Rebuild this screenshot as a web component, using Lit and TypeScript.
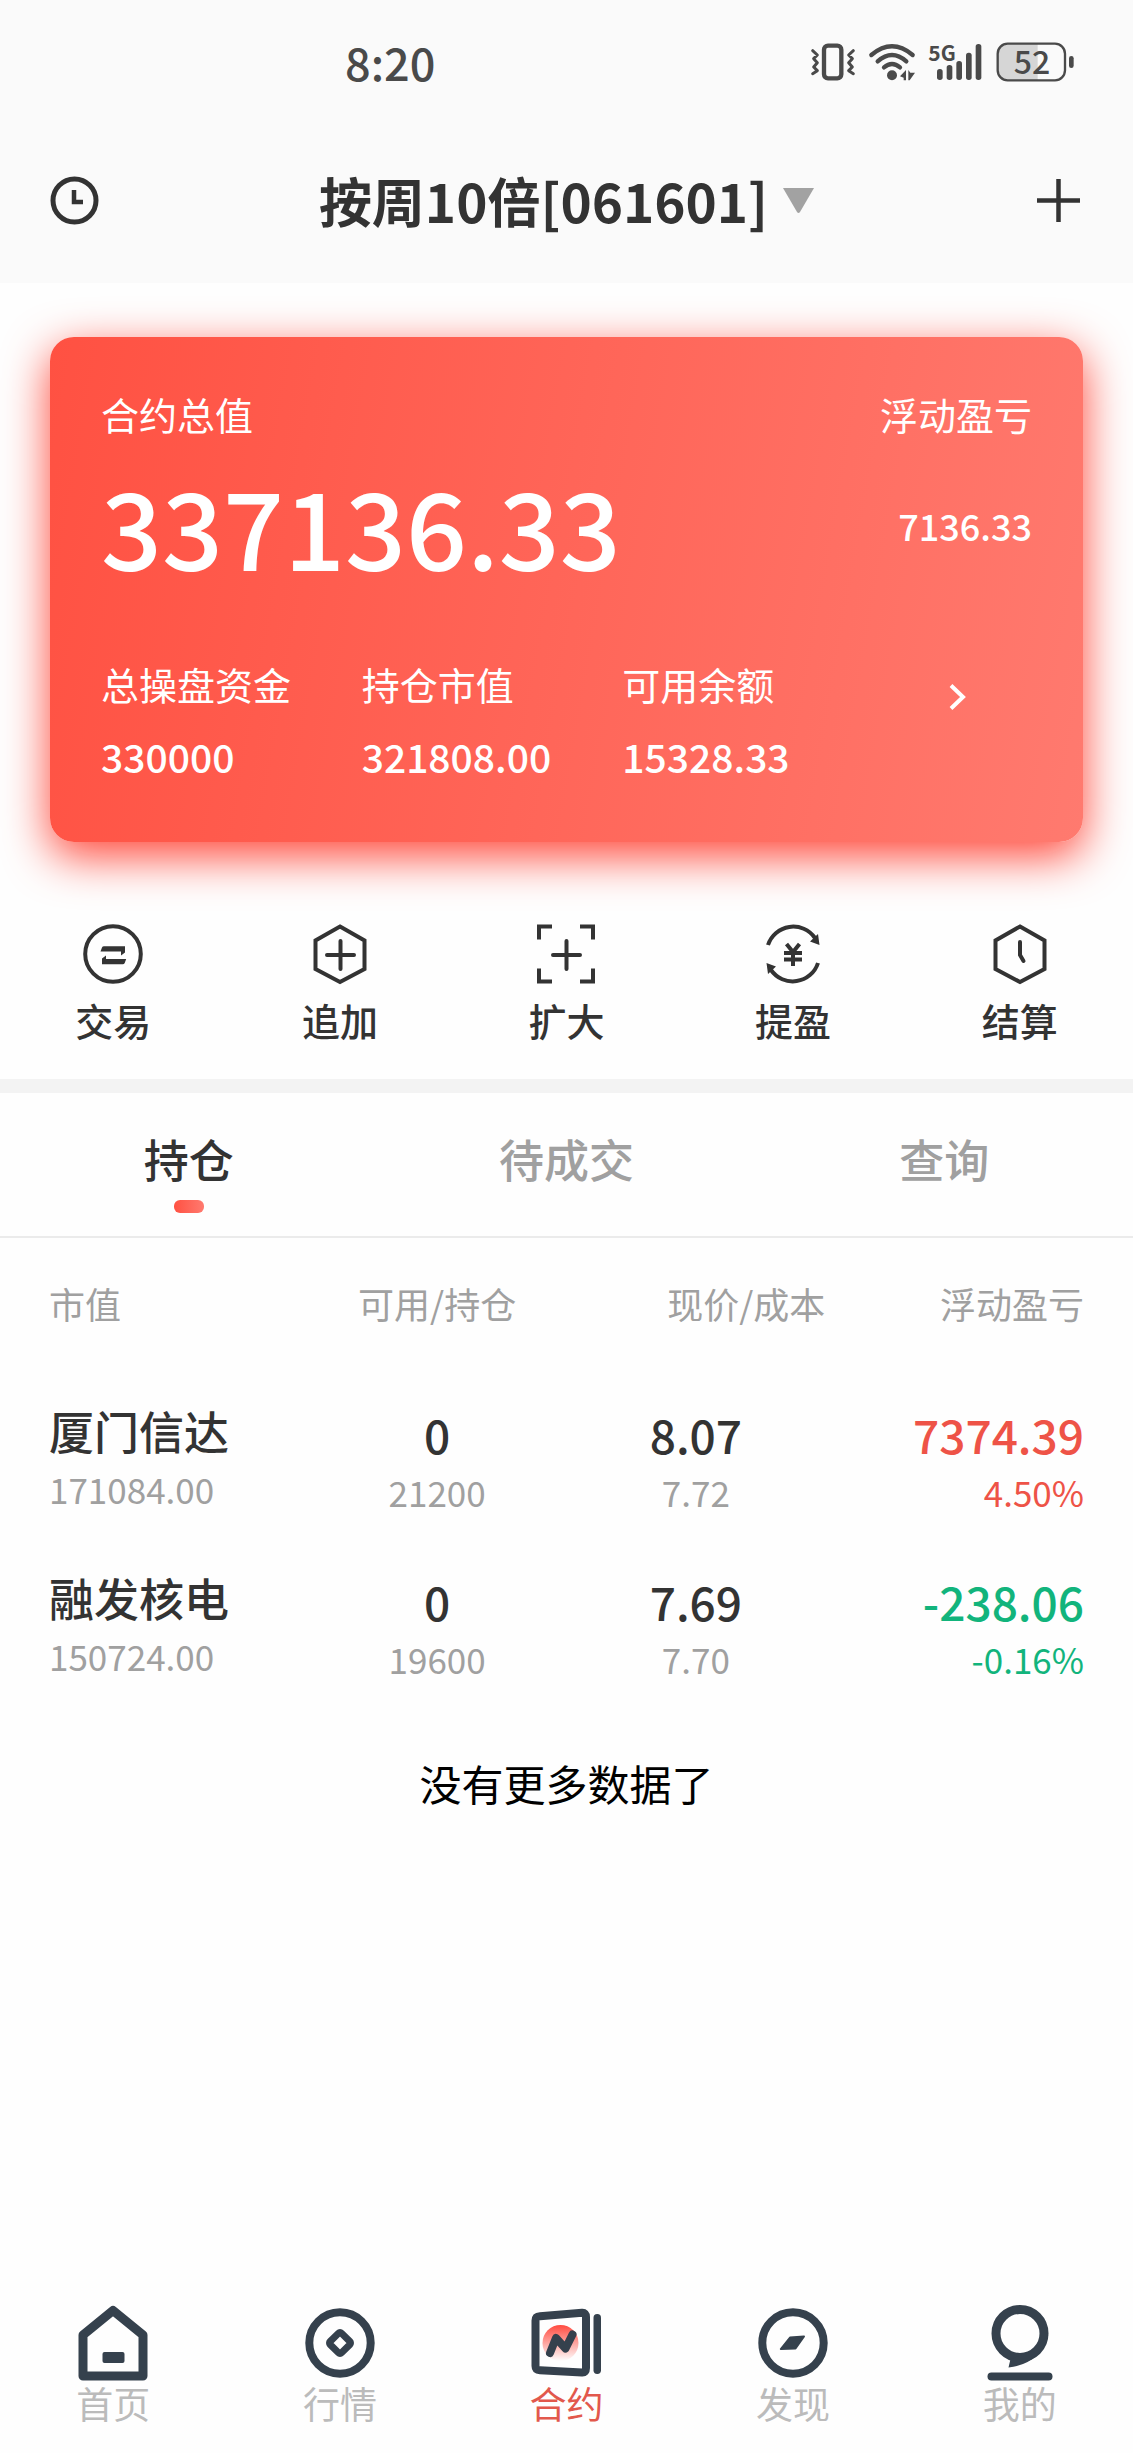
import { LitElement, html, css, svg } from "lit";
import { customElement, state } from "lit/decorators.js";
import { classMap } from "lit/directives/class-map.js";

interface Holding {
  name: string;
  value: string;
  available: string;
  held: string;
  price: string;
  cost: string;
  profit: string;
  rate: string;
  up: boolean;
}

const hexagon = svg`<path d="M30 2.500 L54.500 16.500 V45 L30 58 L5.500 45 V16.500 Z"/>`;
const smallPlus = svg`<path stroke-linecap="round" d="M30.500 17 V45 M17 31 H44"/>`;

const actions = [
  {
    label: "交易",
    icon: svg`<circle cx="30" cy="30" r="27.800"/>
      <path class="solid" d="M17.500 27.500 L19 23.500 Q19.500 22.300 21 22.300 H42 V28.500 L38 31.500 V27.500 Z"/>
      <path class="solid" d="M43.200 35 L41.700 39 Q41.200 40.200 39.700 40.200 H19 V34.500 L23 31.500 V35 Z"/>`,
  },
  { label: "追加", icon: svg`${hexagon}${smallPlus}` },
  {
    label: "扩大",
    icon: svg`<path d="M3 15.500 V2.500 H16 M44 2.500 H57 V15.500 M57 44.500 V57.500 H44 M16 57.500 H3 V44.500"/>${smallPlus}`,
  },
  {
    label: "提盈",
    icon: svg`<path d="M5 21 A26.500 26.500 0 0 1 52 14 M8 46 A26.500 26.500 0 0 0 55 39"/>
      <path class="solid" d="M56.500 21 L47 17.500 L55 10 Z M3.500 39 L13 42.500 L5 50 Z"/>
      <path d="M23.500 20 L30 28 L36.500 20 M21 29 H39 M21 35.500 H39 M30 28 V42"/>`,
  },
  { label: "结算", icon: svg`${hexagon}<path stroke-linecap="round" d="M30 18 V31 L33.500 37"/>` },
];

const navItems = [
  {
    label: "首页",
    icon: svg`<path class="thick" d="M38 5.500 L68 30 V71 H8 V30 Z"/>
      <rect class="solid" x="27.500" y="47" width="22" height="11" rx="2"/>`,
  },
  {
    label: "行情",
    icon: svg`<circle cx="38" cy="38" r="30.700"/>
      <rect x="30" y="30" width="16" height="16" rx="2" stroke-width="7" transform="rotate(45 38 38)"/>`,
  },
  {
    label: "合约",
    icon: svg`<defs><linearGradient id="glow" x1="0" y1="0" x2="0" y2="1">
        <stop offset="0" stop-color="#ff4b40"/><stop offset="1" stop-color="#ff4b40" stop-opacity="0"/>
      </linearGradient></defs>
      <circle cx="32.500" cy="38" r="18" fill="url(#glow)" stroke="none"/>
      <path d="M12 11.200 L54 7.800 Q58 7.500 58 12 V63 Q58 67.800 54 67.500 L12 65.200 Q7.500 65 7.500 61 V15.500 Q7.500 11.500 12 11.200 Z"/>
      <path stroke-linecap="round" d="M22 48 L28 33 L37.500 43.500 L44.500 29.500"/>
      <rect class="solid" x="65.500" y="9" width="7.500" height="60" rx="3.700"/>`,
  },
  {
    label: "发现",
    icon: svg`<circle cx="38" cy="38" r="30.700"/>
      <path class="needle" d="M25.800 44 L35 32.500 L49 31.500 L40.500 43.500 Z"/>`,
  },
  {
    label: "我的",
    icon: svg`<circle class="thick" cx="38" cy="28.500" r="24"/>
      <path class="solid" d="M28.500 54 L26.500 62.500 Q58 59 66.300 30 L50 46 Z"/>
      <rect class="solid" x="5.500" y="67.500" width="65" height="8" rx="4"/>`,
  },
];

@customElement("app-root")
export class AppRoot extends LitElement {
  @state() private tab = 0;
  @state() private nav = 2;

  private readonly holdings: Holding[] = [
    {
      name: "厦门信达", value: "171084.00", available: "0", held: "21200",
      price: "8.07", cost: "7.72", profit: "7374.39", rate: "4.50%", up: true,
    },
    {
      name: "融发核电", value: "150724.00", available: "0", held: "19600",
      price: "7.69", cost: "7.70", profit: "-238.06", rate: "-0.16%", up: false,
    },
  ];

  static styles = css`
    :host {
      display: flex;
      flex-direction: column;
      min-height: 100vh;
      background: #fefefe;
      color: #333;
      font-family: "Noto Sans CJK SC", sans-serif;
      font-size: 38px;
      line-height: 48px;
    }
    button {
      border: 0;
      padding: 0;
      background: none;
      color: inherit;
      font: inherit;
    }
    svg { display: block; flex: none; overflow: visible; }
    .head { background: #fafafa; padding-bottom: 7px; }
    .status {
      display: flex;
      align-items: center;
      justify-content: space-between;
      height: 124px;
      padding: 0 59px 0 345px;
      color: #4a4a4a;
      font-size: 45px;
      font-weight: 500;
    }
    .signals { display: flex; align-items: center; gap: 14px; }
    .signals svg { fill: currentColor; }
    .signals .line { fill: none; stroke: currentColor; }
    .titlebar {
      display: flex;
      align-items: center;
      justify-content: space-between;
      height: 152px;
      padding: 0 50px;
    }
    .titlebar svg { fill: none; stroke: #333; }
    .picker {
      display: flex;
      align-items: center;
      gap: 15px;
      font-size: 53px;
      font-weight: 700;
      line-height: 72px;
    }
    .titlebar .arrow { fill: #a2a2a2; stroke: none; }
    .card {
      margin: 54px 50px 0;
      padding: 53px 51px 62px;
      border-radius: 24px;
      background: linear-gradient(100deg, #ff5142, #ff7a6f);
      box-shadow: 0 14px 46px #ff4436;
      color: #fff;
    }
    .pair {
      display: flex;
      align-items: center;
      justify-content: space-between;
    }
    .total {
      margin: 32px 0 80px;
      line-height: 110px;
    }
    .amount { font-size: 107px; font-weight: 500; }
    .figures {
      display: grid;
      grid-template-columns: 7fr 7fr 7fr 4fr;
      margin: 0;
    }
    .figures dd {
      margin: 24px 0 0;
      font-size: 39px;
      font-weight: 500;
    }
    .pl { font-size: 36px; font-weight: 500; }
    .more {
      display: flex;
      align-items: flex-start;
      justify-content: center;
      padding-top: 24px;
    }
    .more svg { fill: none; stroke: #fff; }
    .actions {
      display: grid;
      grid-template-columns: repeat(5, 1fr);
      padding: 82px 0 36px;
      border-bottom: 14px solid #f3f3f3;
    }
    .action {
      display: flex;
      flex-direction: column;
      align-items: center;
      gap: 13px;
      font-weight: 500;
      line-height: 46px;
    }
    .action svg { fill: none; stroke: currentColor; stroke-width: 4; }
    .action .solid, .nav .solid { fill: currentColor; stroke: none; }
    .tabs {
      display: grid;
      grid-template-columns: repeat(3, 1fr);
      border-bottom: 2px solid #ebebeb;
    }
    .tab {
      display: flex;
      flex-direction: column;
      align-items: center;
      gap: 14px;
      padding: 39px 0 23px;
      color: #a0a0a0;
      font-size: 45px;
      font-weight: 500;
      line-height: 54px;
    }
    .tab::after {
      content: "";
      width: 30px;
      height: 13px;
      border-radius: 6px;
    }
    .tab.on { color: #333; }
    .tab.on::after { background: linear-gradient(90deg, #ff5142, #ff7a6f); }
    .list { padding: 0 49px; }
    table {
      width: 100%;
      table-layout: fixed;
      border-collapse: collapse;
      text-align: center;
    }
    th {
      padding: 43px 0 78px;
      color: #a0a0a0;
      font-size: 36px;
      font-weight: 400;
      line-height: 44px;
    }
    td { padding: 3px 0 56px; }
    td:first-child { padding: 0 0 59px; }
    th:first-child, td:first-child { text-align: left; }
    th:nth-child(3), th:last-child, td:last-child { text-align: right; }
    .main, .sub { display: block; }
    .main {
      font-size: 46px;
      font-weight: 500;
      line-height: 56px;
    }
    .name { font-size: 45px; }
    .sub {
      margin-top: 8px;
      color: #a0a0a0;
      font-size: 35px;
      line-height: 44px;
    }
    .up, .up .sub { color: #ee5347; }
    .down, .down .sub { color: #12b47c; }
    .end {
      margin: 0;
      padding-top: 16px;
      color: #000;
      font-size: 42px;
      line-height: 60px;
      text-align: center;
    }
    .nav {
      display: grid;
      grid-template-columns: repeat(5, 1fr);
      margin-top: auto;
      padding: 40px 0 28px;
    }
    .nav a {
      display: flex;
      flex-direction: column;
      align-items: center;
      color: #bbb;
      font-size: 37px;
      line-height: 44px;
      text-decoration: none;
    }
    .nav a.on { color: #e2584c; }
    .nav svg {
      color: #35414d;
      fill: none;
      stroke: currentColor;
      stroke-width: 8;
      stroke-linejoin: round;
    }
    .nav .thick { stroke-width: 9; }
    .nav .needle { fill: currentColor; stroke-width: 2; }
  `;

  private renderStatus() {
    return html`
      <div class="status">
        <span>8:20</span>
        <div class="signals">
          <svg width="44" height="38" viewBox="93 69 132 114" aria-label="振动" role="img">
            <rect class="line" x="132" y="77" width="52" height="98" rx="12" stroke-width="13"/>
            <path class="line" stroke-width="9" stroke-linejoin="round" stroke-linecap="round"
              d="M98 92 L112 105 L101 116 L112 128 L101 141 L112 152 L98 161 M220 92 L206 105 L217 116 L206 128 L217 141 L206 152 L220 161"/>
          </svg>
          <svg width="46" height="38" viewBox="267 69 138 114" aria-label="无线网络" role="img">
            <path class="line" stroke-width="13" stroke-linecap="round"
              d="M274 105 Q336 53 398 105 M293 124 Q336 86 379 124 M312 142 Q336 122 360 142"/>
            <circle cx="336" cy="166" r="15"/>
            <path d="M378 150 V181 L371 181 V173 L360 169 Z M385 181 V150 L391 158 L405 158 L389 181 Z"/>
          </svg>
          <svg width="53" height="38" viewBox="447 69 159 114" aria-label="5G" role="img">
            <text x="445" y="122" font-size="63" font-weight="700">5G</text>
            <rect x="471" y="147" width="17" height="33" rx="8"/>
            <rect x="500" y="135" width="17" height="45" rx="8"/>
            <rect x="529" y="123" width="17" height="57" rx="8"/>
            <rect x="558" y="98" width="17" height="82" rx="8"/>
            <rect x="587" y="72" width="17" height="108" rx="8"/>
          </svg>
          <svg width="78" height="40" viewBox="648 66 234 120" aria-label="电量" role="img">
            <path fill="#d6d6d6" d="M773 71 V181 H681 Q653 181 653 153 V99 Q653 71 681 71 Z"/>
            <rect class="line" x="653" y="71" width="202" height="110" rx="30" stroke-width="7"/>
            <rect x="867" y="108" width="14" height="36" rx="7"/>
            <text x="701" y="161" font-size="96" font-weight="500">52</text>
          </svg>
        </div>
      </div>
    `;
  }

  private renderCard() {
    return html`
      <section class="card">
        <div class="pair"><span>合约总值</span><span>浮动盈亏</span></div>
        <div class="pair total"><span class="amount">337136.33</span><span class="pl">7136.33</span></div>
        <dl class="figures">
          <div><dt>总操盘资金</dt><dd>330000</dd></div>
          <div><dt>持仓市值</dt><dd>321808.00</dd></div>
          <div><dt>可用余额</dt><dd>15328.33</dd></div>
          <button class="more" aria-label="详情">
            <svg width="18" height="26" viewBox="0 0 18 26"><path stroke-width="4" d="M2 1.500 L14 13 L2 24.500"/></svg>
          </button>
        </dl>
      </section>
    `;
  }

  private renderRow(h: Holding) {
    return html`
      <tr>
        <td><span class="main name">${h.name}</span><span class="sub">${h.value}</span></td>
        <td><span class="main">${h.available}</span><span class="sub">${h.held}</span></td>
        <td><span class="main">${h.price}</span><span class="sub">${h.cost}</span></td>
        <td class=${h.up ? "up" : "down"}><span class="main">${h.profit}</span><span class="sub">${h.rate}</span></td>
      </tr>
    `;
  }

  render() {
    return html`
      <header class="head">
        ${this.renderStatus()}
        <div class="titlebar">
          <button aria-label="历史">
            <svg width="49" height="49" viewBox="0 0 49 49">
              <circle cx="24.500" cy="24.500" r="21.500" stroke-width="5"/>
              <path stroke-width="4.500" d="M24 14 V26 H33"/>
            </svg>
          </button>
          <button class="picker">
            按周10倍[061601]
            <svg class="arrow" width="31" height="25" viewBox="0 0 31 25"><path d="M0 0 H31 L17 24 Q15.500 26 14 24 Z"/></svg>
          </button>
          <button aria-label="新增">
            <svg width="49" height="49" viewBox="0 0 49 49"><path stroke-width="4.500" d="M24.500 3 V46 M3 24.500 H46"/></svg>
          </button>
        </div>
      </header>
      ${this.renderCard()}
      <div class="actions">
        ${actions.map((a) => html`
          <button class="action">
            <svg width="60" height="60" viewBox="0 0 60 60">${a.icon}</svg>
            ${a.label}
          </button>
        `)}
      </div>
      <div class="tabs" role="tablist">
        ${["持仓", "待成交", "查询"].map((label, i) => html`
          <button
            role="tab"
            aria-selected=${this.tab === i}
            class=${classMap({ tab: true, on: this.tab === i })}
            @click=${() => (this.tab = i)}
          >${label}</button>
        `)}
      </div>
      <div class="list">
        <table>
          <thead>
            <tr><th>市值</th><th>可用/持仓</th><th>现价/成本</th><th>浮动盈亏</th></tr>
          </thead>
          <tbody>${this.holdings.map((h) => this.renderRow(h))}</tbody>
        </table>
        <p class="end">没有更多数据了</p>
      </div>
      <nav class="nav">
        ${navItems.map((n, i) => html`
          <a href="#" class=${classMap({ on: this.nav === i })} @click=${(e: Event) => { e.preventDefault(); this.nav = i; }}>
            <svg width="76" height="76" viewBox="0 0 76 76">${n.icon}</svg>
            ${n.label}
          </a>
        `)}
      </nav>
    `;
  }
}
